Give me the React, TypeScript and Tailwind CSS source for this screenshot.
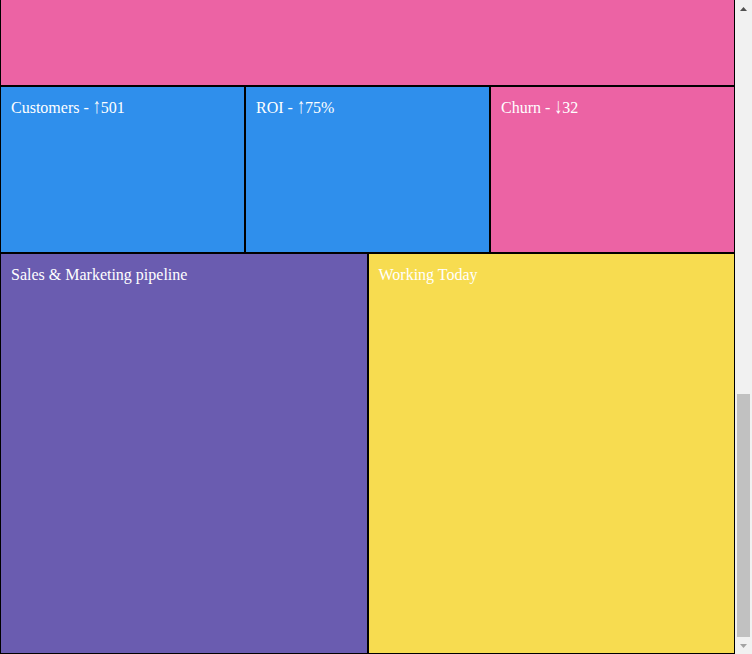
type Tile = {
  title?: string
  arrow?: string
  value?: string
  color: string
}

const KPI_ROW: Tile[] = [
  { title: 'Customers - ', arrow: '↑', value: '501', color: 'bg-[#2f8fec]' },
  { title: 'ROI - ', arrow: '↑', value: '75%', color: 'bg-[#2f8fec]' },
  { title: 'Churn - ', arrow: '↓', value: '32', color: 'bg-[#ec63a4]' },
]

const BOTTOM_ROW: Tile[] = [
  { title: 'Sales & Marketing pipeline', color: 'bg-[#6a5cb0]' },
  { title: 'Working Today', color: 'bg-[#f7dc50]' },
]

function TileBox({ tile }: { tile: Tile }) {
  return (
    <div className={`flex-1 min-w-0 border border-black px-[10px] pt-[9px] pb-[10px] ${tile.color}`}>
      {tile.title && (
        <span className="text-white text-[16px] leading-[18px] whitespace-pre">
          {tile.title}
          {tile.arrow && (
            <span className="inline-block scale-y-[1.35] origin-[50%_80%]">{tile.arrow}</span>
          )}
          {tile.value}
        </span>
      )}
    </div>
  )
}

function Row({ tiles, height }: { tiles: Tile[]; height: string }) {
  return (
    <div className={`flex shrink-0 ${height}`}>
      {tiles.map((t, i) => (
        <TileBox key={i} tile={t} />
      ))}
    </div>
  )
}

// classic scrollbar, page sits scrolled to the bottom
function Scrollbar() {
  return (
    <div className="w-[17px] shrink-0 flex flex-col bg-[#f1f1f1]">
      <div className="h-[17px] flex items-center justify-center">
        <svg width="7" height="4" viewBox="0 0 7 4">
          <polygon points="3.5,0 7,4 0,4" fill="#505050" />
        </svg>
      </div>
      <div className="flex-1 flex flex-col">
        <div className="h-[377px]" />
        <div className="h-[243px] mx-[2px] bg-[#c1c1c1]" />
      </div>
      <div className="h-[17px] flex items-center justify-center">
        <svg width="7" height="4" viewBox="0 0 7 4">
          <polygon points="0,0 7,0 3.5,4" fill="#a3a3a3" />
        </svg>
      </div>
    </div>
  )
}

export default function App() {
  return (
    <div className="h-[654px] flex overflow-hidden bg-white font-['Liberation_Serif','Times_New_Roman',serif]">
      <div className="flex-1 min-w-0 flex flex-col">
        <div className="h-[86px] shrink-0 border border-t-0 border-black bg-[#ec63a4]" />
        <Row tiles={KPI_ROW} height="h-[167px]" />
        <Row tiles={BOTTOM_ROW} height="h-[401px]" />
      </div>
      <Scrollbar />
    </div>
  )
}
